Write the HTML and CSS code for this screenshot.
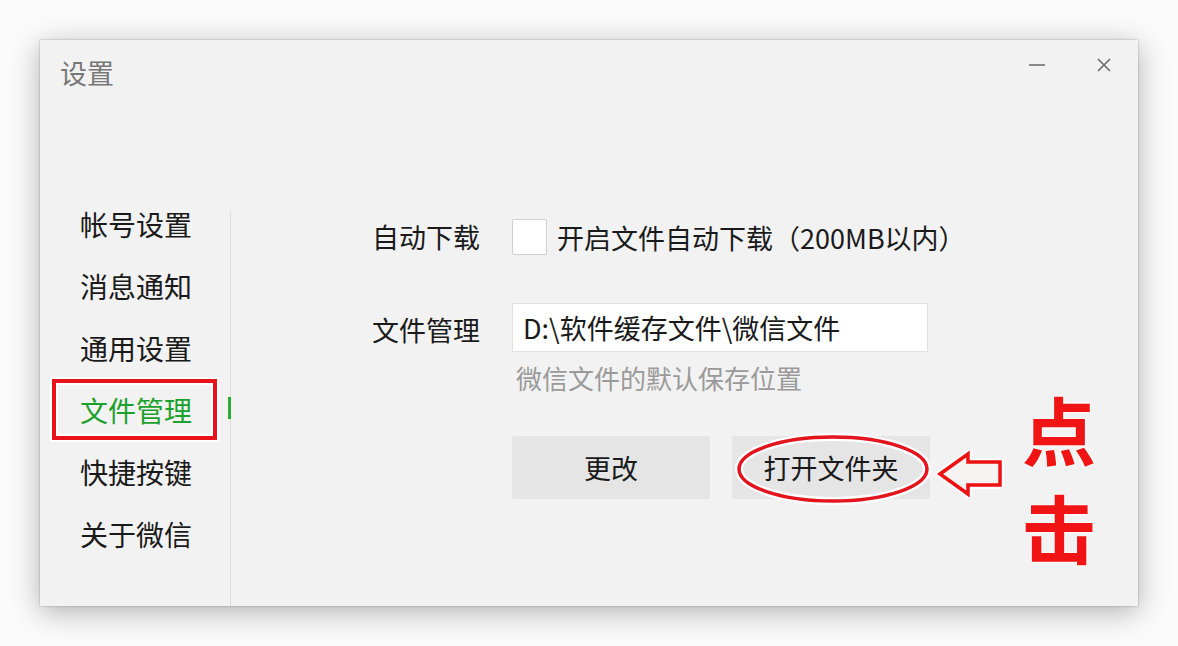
FILE: index.html
```html
<!DOCTYPE html>
<html lang="zh-CN">
<head>
<meta charset="utf-8">
<title>设置</title>
<link rel="stylesheet" href="styles.css">
</head>
<body>
<div class="window">
  <div class="titlebar">
    <div class="title">设置</div>
    <div class="controls">
      <span class="ctl-min"></span>
      <svg class="ctl-close" width="16" height="16" viewBox="0 0 16 16"><path d="M2 2 L14 14 M14 2 L2 14" stroke="#6b6b6b" stroke-width="1.6" fill="none"/></svg>
    </div>
  </div>
  <div class="body">
    <nav class="sidebar">
      <div class="nav-item">帐号设置</div>
      <div class="nav-item">消息通知</div>
      <div class="nav-item">通用设置</div>
      <div class="nav-item active">文件管理</div>
      <div class="nav-item">快捷按键</div>
      <div class="nav-item">关于微信</div>
    </nav>
    <div class="divider"></div>
    <main class="content">
      <div class="row row-auto">
        <div class="label">自动下载</div>
        <span class="checkbox"></span>
        <span class="check-text">开启文件自动下载（200MB以内）</span>
      </div>
      <div class="row row-path">
        <div class="label">文件管理</div>
        <div class="path-box">D:\软件缓存文件\微信文件</div>
      </div>
      <div class="hint">微信文件的默认保存位置</div>
      <div class="buttons">
        <div class="btn">更改</div>
        <div class="btn btn-open">打开文件夹
          <svg class="ellipse" width="200" height="74" viewBox="0 0 200 74">
            <ellipse cx="100" cy="36" rx="94" ry="32" fill="none" stroke="#fff" stroke-width="8"/>
            <ellipse cx="100" cy="36" rx="94" ry="32" fill="none" stroke="#e3141b" stroke-width="3.5"/>
          </svg>
          <svg class="arrow" width="72" height="52" viewBox="0 0 72 52">
            <path d="M6 26 L34 6 L34 14 L66 14 L66 37 L34 37 L34 46 Z" fill="#f7f3f3" stroke="#fff" stroke-width="8" stroke-linejoin="round"/>
            <path d="M6 26 L34 6 L34 14 L66 14 L66 37 L34 37 L34 46 Z" fill="#f7f3f3" stroke="#ee1111" stroke-width="3.5" stroke-linejoin="miter"/>
          </svg>
        </div>
      </div>
      <div class="callout">点<br>击</div>
    </main>
  </div>
</div>
</body>
</html>
```

FILE: styles.css
```css
html, body {
  margin: 0;
  padding: 0;
}
body {
  background: #fbfbfb;
  width: 1178px;
  height: 646px;
  overflow: hidden;
  font-family: "Noto Sans CJK SC", "Noto Sans", sans-serif;
  color: #1a1a1a;
  padding: 40px 0 0 40px;
  box-sizing: border-box;
}
.window {
  width: 1098px;
  height: 566px;
  background: #f2f2f2;
  box-shadow: 0 6px 28px rgba(0, 0, 0, 0.3), 0 0 2px rgba(0, 0, 0, 0.28);
  display: flex;
  flex-direction: column;
}
.titlebar {
  height: 150px;
  display: flex;
  justify-content: space-between;
  align-items: flex-start;
  padding: 0 26px 0 20px;
}
.title {
  margin-top: 17px;
  font-size: 27px;
  line-height: 32px;
  color: #777;
}
.controls {
  display: flex;
  align-items: center;
  gap: 51px;
  margin-top: 17px;
}
.ctl-min {
  width: 16px;
  height: 2px;
  background: #8a8a8a;
}
.ctl-close {
  display: block;
}
.body {
  flex: 1;
  display: flex;
}
.sidebar {
  width: 190px;
  padding-top: 3px;
}
.nav-item {
  position: relative;
  height: 62px;
  line-height: 62px;
  padding-left: 40px;
  font-size: 28px;
  color: #1a1a1a;
}
.nav-item.active {
  color: #1aa12b;
}
.nav-item.active::before {
  content: "";
  position: absolute;
  left: 12px;
  top: 0;
  width: 157px;
  height: 53px;
  border: 4px solid #e8121a;
  box-shadow: 0 0 0 2px #fff, inset 0 0 0 2px #fff;
}
.nav-item.active::after {
  content: "";
  position: absolute;
  left: 188px;
  top: 18px;
  width: 3px;
  height: 22px;
  background: #2dab3a;
}
.divider {
  width: 1px;
  background: #dadada;
  margin-top: 22px;
}
.content {
  flex: 1;
  position: relative;
  padding: 28px 0 0 141px;
}
.row {
  display: flex;
  align-items: center;
}
.label {
  width: 140px;
  font-size: 27px;
  line-height: 36px;
}
.checkbox {
  width: 33px;
  height: 34px;
  background: #fff;
  border: 1px solid #cfcfcf;
  border-radius: 2px;
  margin-right: 10px;
}
.check-text {
  font-size: 27px;
  line-height: 36px;
  margin-top: 2px;
}
.row-path {
  margin-top: 47px;
}
.row-path .label {
  margin-top: 4px;
}
.path-box {
  width: 404px;
  height: 47px;
  background: #fff;
  border: 1px solid #e2e2e2;
  padding-left: 10px;
  font-size: 27px;
  line-height: 47px;
}
.hint {
  margin: 8px 0 0 144px;
  font-size: 26px;
  line-height: 36px;
  color: #9a9a9a;
}
.buttons {
  display: flex;
  gap: 22px;
  margin: 40px 0 0 140px;
}
.btn {
  position: relative;
  width: 198px;
  height: 63px;
  background: #e5e5e5;
  font-size: 27px;
  line-height: 63px;
  text-align: center;
  border-radius: 2px;
}
.ellipse {
  position: absolute;
  left: 1px;
  top: -3px;
}
.arrow {
  position: absolute;
  left: 202px;
  top: 12px;
}
.callout {
  position: absolute;
  left: 791px;
  top: 189px;
  font-size: 74px;
  line-height: 98px;
  font-weight: 700;
  color: #f01414;
  text-shadow: 0 0 3px #fff, 0 0 3px #fff;
}
```
